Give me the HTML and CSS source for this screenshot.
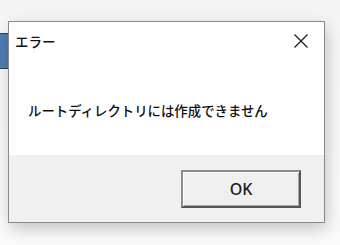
FILE: index.html
```html
<!DOCTYPE html>
<html lang="ja">
<head>
    <meta charset="UTF-8">
    <title>エラー</title>
    <link rel="stylesheet" href="styles.css">
</head>
<body>

    <!-- Window behind the dialog -->
    <div class="back-window"></div>

    <!-- Error dialog -->
    <div class="dialog">
        <div class="titlebar">
            <span class="title">エラー</span>
            <button class="close-button" aria-label="閉じる">
                <svg width="16" height="16" viewBox="0 0 16 16">
                    <path d="M1.5 1.5 L14.5 14.5 M14.5 1.5 L1.5 14.5" stroke="#1e1e1e" stroke-width="1.3" fill="none"/>
                </svg>
            </button>
        </div>
        <div class="message">ルートディレクトリには作成できません</div>
        <div class="footer">
            <button class="ok-button">OK</button>
        </div>
    </div>

</body>
</html>
```

FILE: styles.css
```css
body {
    margin: 0;
    width: 340px;
    height: 245px;
    overflow: hidden;
    background: linear-gradient(#f2f2f2, #f7f7f7 30px, #fbfbfb);
    font-family: "Noto Sans CJK JP", "Noto Sans", sans-serif;
    position: relative;
}
.back-window {
    position: absolute;
    left: 0;
    top: 33px;
    width: 12px;
    height: 34px;
    background-color: #4f7db2;
    border-top: 1px solid #2b3e55;
    border-bottom: 1px solid #2b3e55;
}
.dialog {
    position: relative;
    margin: 21px 0 0 8px;
    width: 315px;
    border: 1px solid #8a8a8a;
    background-color: #ffffff;
    box-shadow: 2px 6px 16px rgba(0, 0, 0, 0.22);
}
.titlebar {
    height: 38px;
    display: flex;
    align-items: center;
    justify-content: space-between;
    padding-left: 6px;
}
.title {
    font-size: 13.5px;
    font-weight: 500;
    color: #111;
}
.close-button {
    background: none;
    border: none;
    padding: 0;
    width: 46px;
    height: 38px;
    display: flex;
    align-items: center;
    justify-content: center;
}
.message {
    height: 95px;
    box-sizing: border-box;
    padding: 40px 0 0 19px;
    font-size: 13.4px;
    font-weight: 500;
    line-height: 20px;
    color: #111;
}
.footer {
    height: 67px;
    box-sizing: border-box;
    background-color: #f0f0f0;
    display: flex;
    justify-content: flex-end;
    padding: 15px 23px 0 0;
}
.ok-button {
    width: 120px;
    height: 38px;
    box-sizing: border-box;
    background-color: #efefef;
    border: 2px solid;
    border-color: #8c8c8c #555555 #555555 #8c8c8c;
    box-shadow: inset 1px 1px 0 #ffffff, inset -1px -1px 0 #a8a8a8;
    font-family: "Noto Sans", sans-serif;
    font-size: 16px;
    font-weight: 500;
    color: #1a1a1a;
    padding: 0;
}
```
